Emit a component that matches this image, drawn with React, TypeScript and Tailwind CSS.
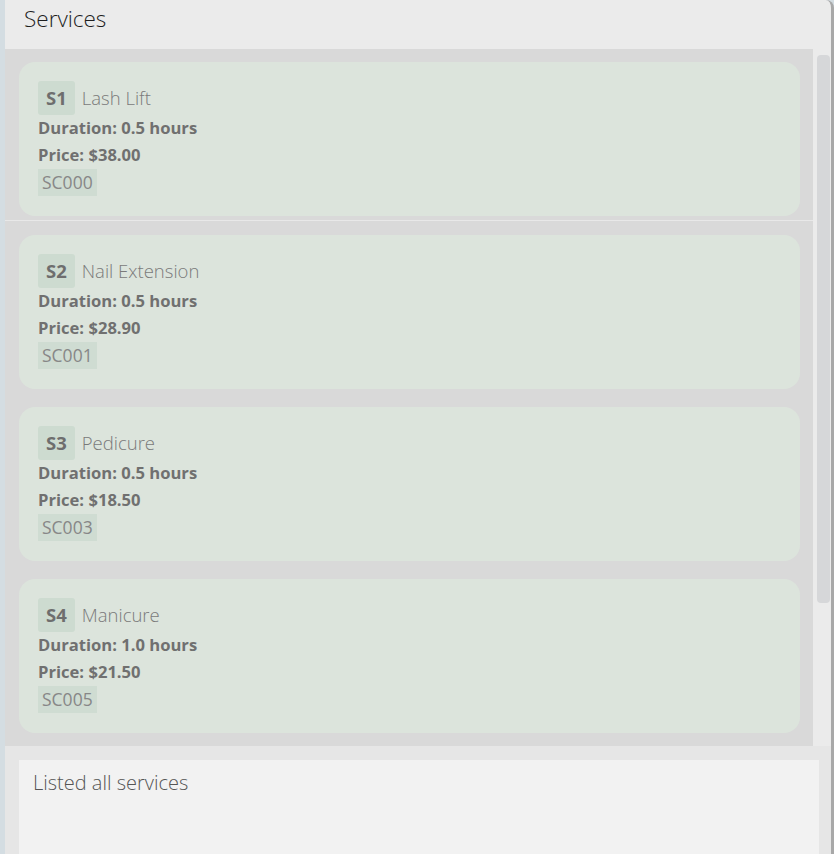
import { FC } from 'react';

type Service = { idx: string; name: string; duration: string; price: string; code: string };

const services: Service[] = [
    { idx: 'S1', name: 'Lash Lift', duration: '0.5', price: '38.00', code: 'SC000' },
    { idx: 'S2', name: 'Nail Extension', duration: '0.5', price: '28.90', code: 'SC001' },
    { idx: 'S3', name: 'Pedicure', duration: '0.5', price: '18.50', code: 'SC003' },
    { idx: 'S4', name: 'Manicure', duration: '1.0', price: '21.50', code: 'SC005' },
];

const ServiceCard: FC<{ s: Service; first: boolean }> = ({ s, first }) => (
    <div className={`h-[172px] pt-[13px] pl-[14px] pr-[13px] ${first ? 'border-b border-[#e8e8e8]' : 'pt-[14px]'}`}>
        <div className="h-[154px] rounded-[16px] bg-[#dce4dc] pl-[19px] pt-[19px]">
            <div className="flex items-center h-[34px]">
                <span className="h-[34px] px-[8px] flex items-center rounded-[3px] bg-[#cddbd0] text-[18.5px] font-bold text-[#6e6e6e]">{s.idx}</span>
                <span className="ml-[7px] text-[18.5px] font-light text-[#7a7a7a]">{s.name}</span>
            </div>
            <p className="text-[16.6px] font-bold text-[#707070] leading-[26px]">Duration: {s.duration} hours</p>
            <p className="text-[16.6px] font-bold text-[#707070] leading-[27px]">Price: ${s.price}</p>
            <span className="inline-block mt-[1px] h-[27px] px-[4px] leading-[27px] bg-[#cfdcd2] text-[17.5px] text-[#878787]">{s.code}</span>
        </div>
    </div>
);

export default function App() {
    return (
        <div className="w-[834px] h-[854px] flex bg-[#d4dde2] overflow-hidden" style={{ fontFamily: '"Open Sans", "Noto Sans", sans-serif' }}>
            <div className="w-[5px] shrink-0" />
            <div className="flex-1 flex flex-col bg-[#ebebeb] rounded-tr-[8px] border-r-[3px] border-[#a8a8a8]">
                <div className="h-[49px] shrink-0 pl-[19px] flex items-center">
                    <h1 className="text-[22.5px] font-light text-[#1e1e1e] -mt-[12px]">Services</h1>
                </div>
                <div className="h-[697px] shrink-0 flex">
                    <div className="flex-1 bg-[#d9d9d9] overflow-hidden">
                        {services.map((s, i) => <ServiceCard key={s.idx} s={s} first={i === 0} />)}
                    </div>
                    <div className="w-[18px] shrink-0 bg-[#ebebeb] pt-[6px] pl-[4px]">
                        <div className="w-[13px] h-[548px] rounded-[4px] bg-[#d6d7d9]" />
                    </div>
                </div>
                <div className="flex-1 bg-[#e6e6e6] pt-[14px] pl-[14px] pr-[12px]">
                    <div className="h-full bg-[#f2f2f2] pl-[14px] pt-[8px]">
                        <p className="text-[20px] font-light text-[#555]">Listed all services</p>
                    </div>
                </div>
            </div>
        </div>
    );
}
